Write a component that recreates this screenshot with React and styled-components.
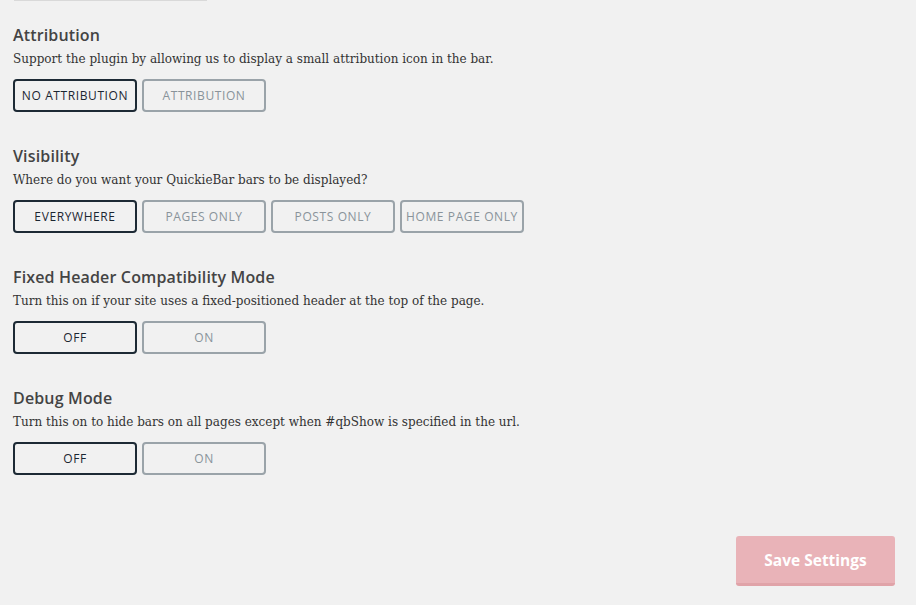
import React, { useState } from 'react'
import styled, { createGlobalStyle } from 'styled-components'

const GlobalStyle = createGlobalStyle`
  html, body {
    margin: 0;
    padding: 0;
    background: #f1f1f1;
  }
`

const sections = [
  {
    key: 'attribution',
    title: 'Attribution',
    text: 'Support the plugin by allowing us to display a small attribution icon in the bar.',
    options: ['No Attribution', 'Attribution'],
  },
  {
    key: 'visibility',
    title: 'Visibility',
    text: 'Where do you want your QuickieBar bars to be displayed?',
    options: ['Everywhere', 'Pages Only', 'Posts Only', 'Home Page Only'],
  },
  {
    key: 'fixed',
    title: 'Fixed Header Compatibility Mode',
    text: 'Turn this on if your site uses a fixed-positioned header at the top of the page.',
    options: ['Off', 'On'],
  },
  {
    key: 'debug',
    title: 'Debug Mode',
    text: 'Turn this on to hide bars on all pages except when #qbShow is specified in the url.',
    options: ['Off', 'On'],
  },
]

function App() {
  const [values, setValues] = useState({
    attribution: 0,
    visibility: 0,
    fixed: 0,
    debug: 0,
  })

  return (
    <Page>
      <GlobalStyle />
      <TopRule />
      {sections.map((s) => (
        <Section key={s.key}>
          <Title>{s.title}</Title>
          <Description>{s.text}</Description>
          <ButtonRow>
            {s.options.map((opt, i) => (
              <Choice
                key={opt}
                $active={values[s.key] === i}
                onClick={() => setValues({ ...values, [s.key]: i })}
              >
                {opt}
              </Choice>
            ))}
          </ButtonRow>
        </Section>
      ))}
      <Footer>
        <SaveButton>Save Settings</SaveButton>
      </Footer>
    </Page>
  )
}

export default App

const Page = styled.div`
  width: 916px;
  height: 605px;
  box-sizing: border-box;
  padding-left: 13px;
  display: flex;
  flex-direction: column;
`

const TopRule = styled.div`
  width: 193px;
  height: 1px;
  margin-left: 1px;
  background: #d9d9d9;
`

const Section = styled.section`
  margin-top: 24px;
  & + & {
    margin-top: 34px;
  }
`

const Title = styled.h3`
  margin: 0;
  font-family: "Open Sans", "Noto Sans", sans-serif;
  font-weight: 600;
  font-size: 16px;
  letter-spacing: 0.15px;
  line-height: 20px;
  color: #444;
`

const Description = styled.p`
  margin: 5px 0 11px;
  font-family: "DejaVu Serif", "Liberation Serif", serif;
  font-size: 12px;
  line-height: 18px;
  color: #333;
`

const ButtonRow = styled.div`
  display: flex;
  gap: 5px;
`

const Choice = styled.button`
  width: 124px;
  height: 33px;
  box-sizing: border-box;
  padding: 0;
  border: 2px solid ${(p) => (p.$active ? '#1d2a35' : '#9aa3a9')};
  border-radius: 4px;
  background: transparent;
  font-family: "Open Sans", "Noto Sans", sans-serif;
  font-size: 12px;
  font-weight: 500;
  letter-spacing: 0.6px;
  text-transform: uppercase;
  color: ${(p) => (p.$active ? '#1b2631' : '#89939a')};
  cursor: pointer;
`

const Footer = styled.div`
  display: flex;
  justify-content: flex-end;
  padding-right: 21px;
  margin-top: 61px;
`

const SaveButton = styled.button`
  width: 159px;
  height: 50px;
  box-sizing: border-box;
  border: none;
  border-bottom: 3px solid #e0a3a8;
  border-radius: 3px;
  background: #e9b3b8;
  color: #fff;
  font-family: "Open Sans", "Noto Sans", sans-serif;
  font-weight: 700;
  font-size: 15.5px;
  cursor: pointer;
`
